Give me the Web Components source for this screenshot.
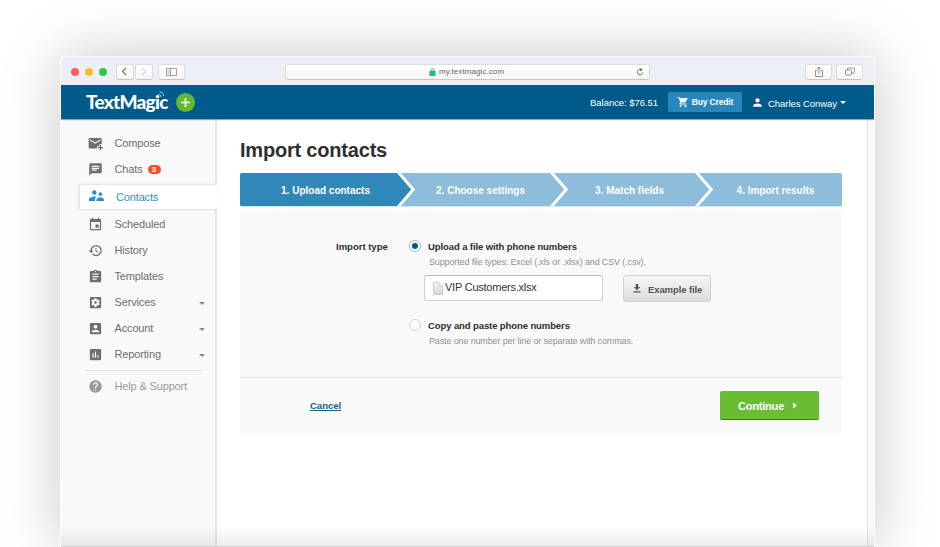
<!DOCTYPE html>
<html lang="en">
<head>
<meta charset="utf-8">
<title>Import contacts</title>
<style>
    html, body {
        margin: 0;
        padding: 0;
        height: 547px;
        overflow: hidden;
        background: #fff;
        font-family: "Liberation Sans", Arial, sans-serif;
    }
</style>
</head>
<body>
<browser-window>
    <browser-toolbar slot="toolbar" url="my.textmagic.com"></browser-toolbar>
    <app-header slot="header" balance="$76.51" user="Charles Conway"></app-header>
    <side-nav slot="nav">
        <nav-item icon="compose">Compose</nav-item>
        <nav-item icon="chat" badge="3">Chats</nav-item>
        <nav-item icon="contacts" active>Contacts</nav-item>
        <nav-item icon="event">Scheduled</nav-item>
        <nav-item icon="history">History</nav-item>
        <nav-item icon="clipboard">Templates</nav-item>
        <nav-item icon="services" expandable>Services</nav-item>
        <nav-item icon="account" expandable>Account</nav-item>
        <nav-item icon="report" expandable>Reporting</nav-item>
        <nav-item icon="help" muted>Help &amp; Support</nav-item>
    </side-nav>
    <import-page>
        <step-bar slot="steps">
            <step-item style="width:157px" active>1. Upload contacts</step-item>
            <step-item style="width:153px">2. Choose settings</step-item>
            <step-item style="width:145px">3. Match fields</step-item>
            <step-item style="width:147px" last>4. Import results</step-item>
        </step-bar>
        <radio-option checked label="Upload a file with phone numbers" hint="Supported file types: Excel (.xls or .xlsx) and CSV (.csv).">
            <file-picker name="VIP Customers.xlsx"></file-picker>
        </radio-option>
        <radio-option label="Copy and paste phone numbers" hint="Paste one number per line or separate with commas."></radio-option>
    </import-page>
</browser-window>

<script>
const icons = {
    compose: '<path d="M20 3H3C1.900 3 1 3.900 1 5v13c0 1.100.9 2 2 2h11.500v-3.500H18V13h4V5c0-1.100-.9-2-2-2zm0 4.200l-8.500 5.300L3 7.200V5l8.500 5.300L20 5z"/><path d="M19 14.500h2v3h3v2h-3v3h-2v-3h-3v-2h3z"/>',
    chat: '<path d="M20 2H4c-1.100 0-2 .9-2 2v18l4-4h14c1.100 0 2-.9 2-2V4c0-1.100-.9-2-2-2zM6 6h12v2H6zm0 3h12v2H6zm0 3h8v2H6z"/>',
    contacts: '<circle cx="8.500" cy="5.500" r="3.700"/><circle cx="18" cy="8" r="3"/><path d="M0 19v-2.500C0 13.500 5 12 8.500 12c1 0 2.300.1 3.500.4-1.700 1.200-2.500 2.600-2.500 4.600v2zM12 19v-2c0-2.500 3.500-4 6-4s6 1.500 6 4v2z"/>',
    event: '<path d="M17 12h-5v5h5v-5zM16 1v2H8V1H6v2H5c-1.110 0-1.990.9-1.990 2L3 19c0 1.100.89 2 2 2h14c1.100 0 2-.9 2-2V5c0-1.100-.9-2-2-2h-1V1h-2zm3 18H5V8h14v11z"/>',
    history: '<path d="M13 3a9 9 0 0 0-9 9H1l3.890 3.890.07.14L9 12H6c0-3.870 3.130-7 7-7s7 3.130 7 7-3.130 7-7 7c-1.930 0-3.680-.79-4.940-2.060l-1.420 1.420A8.950 8.950 0 0 0 13 21a9 9 0 0 0 0-18zm-1 5v5l4.280 2.540.72-1.210-3.500-2.080V8H12z"/>',
    clipboard: '<path d="M19 3h-4.180C14.400 1.840 13.300 1 12 1s-2.400.84-2.820 2H5c-1.100 0-2 .9-2 2v14c0 1.100.9 2 2 2h14c1.100 0 2-.9 2-2V5c0-1.100-.9-2-2-2zm-7 0c.55 0 1 .45 1 1s-.45 1-1 1-1-.45-1-1 .45-1 1-1zm2 14H7v-2h7v2zm3-4H7v-2h10v2zm0-4H7V7h10v2z"/>',
    services: '<path d="M12 10c-1.100 0-2 .9-2 2s.9 2 2 2 2-.9 2-2-.9-2-2-2zm7-7H5a2 2 0 0 0-2 2v14c0 1.100.89 2 2 2h14c1.110 0 2-.9 2-2V5a2 2 0 0 0-2-2zm-1.750 9c0 .23-.02.46-.05.68l1.480 1.160c.13.11.17.3.08.45l-1.400 2.420c-.09.15-.27.21-.43.15l-1.740-.7c-.36.28-.76.51-1.180.69l-.26 1.850c-.03.17-.18.3-.35.3h-2.800c-.17 0-.32-.13-.35-.29l-.26-1.850c-.43-.18-.82-.41-1.180-.69l-1.740.7c-.16.06-.34 0-.43-.15l-1.400-2.420c-.09-.15-.05-.34.08-.45l1.480-1.160a5.600 5.600 0 0 1 0-1.370l-1.480-1.160c-.13-.11-.17-.3-.08-.45l1.400-2.420c.09-.15.27-.21.43-.15l1.740.7c.36-.28.76-.51 1.180-.69l.26-1.850c.03-.17.18-.3.35-.3h2.800c.17 0 .32.13.35.29l.26 1.850c.43.18.82.41 1.180.69l1.740-.7c.16-.06.34 0 .43.15l1.400 2.420c.09.15.05.34-.08.45l-1.480 1.160c.03.23.05.46.05.69z"/>',
    account: '<path d="M3 5v14c0 1.100.89 2 2 2h14c1.100 0 2-.9 2-2V5c0-1.100-.9-2-2-2H5c-1.110 0-2 .9-2 2zm12 4c0 1.660-1.340 3-3 3s-3-1.340-3-3 1.340-3 3-3 3 1.340 3 3zm-9 8c0-2 4-3.100 6-3.100s6 1.100 6 3.100v1H6v-1z"/>',
    report: '<path d="M19 3H5c-1.100 0-2 .9-2 2v14c0 1.100.9 2 2 2h14c1.100 0 2-.9 2-2V5c0-1.100-.9-2-2-2zM9 17H7v-7h2v7zm4 0h-2V7h2v10zm4 0h-2v-4h2v4z"/>',
    help: '<path d="M12 2a10 10 0 1 0 0 20 10 10 0 0 0 0-20zm1 17h-2v-2h2v2zm2.070-7.750l-.9.920C13.450 12.900 13 13.500 13 15h-2v-.5c0-1.100.45-2.100 1.170-2.830l1.240-1.260c.37-.36.59-.86.59-1.410 0-1.100-.9-2-2-2s-2 .9-2 2H8a4 4 0 0 1 8 0c0 .88-.36 1.680-.93 2.250z"/>',
    cart: '<path d="M7 18a2 2 0 1 0 0 4 2 2 0 0 0 0-4zM1 2v2h2l3.600 7.590-1.350 2.450C4.520 15.370 5.480 17 7 17h12v-2H7.420l-.12-.37.9-1.630h7.450c.75 0 1.410-.41 1.750-1.030L21.700 4H5.210l-.94-2H1zm16 16a2 2 0 1 0 0 4 2 2 0 0 0 0-4z"/>',
    person: '<path d="M12 12c2.210 0 4-1.790 4-4s-1.790-4-4-4-4 1.790-4 4 1.790 4 4 4zm0 2c-2.670 0-8 1.340-8 4v2h16v-2c0-2.660-5.330-4-8-4z"/>'
};

class BaseElement extends HTMLElement {
    constructor() {
        super();
        this.attachShadow({mode: "open"});
    }

    connectedCallback() {
        this.shadowRoot.innerHTML = this.render();
    }

    attr(name) {
        return this.getAttribute(name) || "";
    }
}

class BrowserWindow extends BaseElement {
    render() {
        return `
        <style>
            :host {
                display: block;
                padding: 56px 0 0 60px;
            }
            .window {
                position: relative;
                display: flex;
                flex-direction: column;
                box-sizing: border-box;
                width: 815px;
                height: 491px;
                border: 1px solid #fff;
                border-bottom: 1px solid #d2d2d2;
                border-radius: 6px 6px 0 0;
                background: #fff;
                box-shadow: 0 0 60px rgba(0, 0, 0, 0.22);
                overflow: hidden;
            }
            .body {
                display: flex;
                flex: 1;
            }
            .rail {
                width: 6px;
                border-left: 1px solid #e2e2e2;
                background: #f9f9f9;
            }
            .fade {
                position: absolute;
                left: 0;
                right: 0;
                bottom: 0;
                height: 20px;
                background: linear-gradient(rgba(0, 0, 0, 0), rgba(0, 0, 0, 0.07));
            }
        </style>
        <div class="window">
            <slot name="toolbar"></slot>
            <slot name="header"></slot>
            <div class="body">
                <slot name="nav"></slot>
                <slot></slot>
                <div class="rail"></div>
            </div>
            <div class="fade"></div>
        </div>`;
    }
}

class BrowserToolbar extends BaseElement {
    render() {
        return `
        <style>
            :host {
                display: flex;
                align-items: center;
                box-sizing: border-box;
                height: 28px;
                padding: 1px 11px 0 10px;
                background: #eceff5;
            }
            .dot {
                width: 8px;
                height: 8px;
                margin-right: 6px;
                border-radius: 50%;
                background: #fb5d57;
            }
            .dot.min { background: #fdbb2d; }
            .dot.max { background: #2acb42; margin-right: 9px; }
            .btn {
                display: flex;
                align-items: center;
                justify-content: center;
                box-sizing: border-box;
                width: 27px;
                height: 16px;
                border: 1px solid #dcdde0;
                border-bottom-color: #c4c5c8;
                border-radius: 3px;
                background: linear-gradient(#fff, #f5f5f6);
            }
            .btn.small { width: 18px; margin-right: 1px; }
            .url {
                display: flex;
                align-items: center;
                box-sizing: border-box;
                width: 365px;
                height: 16px;
                margin: 0 155px 0 100px;
                padding: 0 5px 0 143px;
                border: 1px solid #dcdde0;
                border-bottom: 1px solid #c4c5c8;
                border-radius: 3px;
                background: linear-gradient(#fff, #f5f5f6);
                color: #666;
                font-size: 8px;
                line-height: 14px;
                letter-spacing: 0.08px;
            }
            .url span { margin: 0 auto 0 3px; }
            svg { display: block; fill: none; stroke: #888; }
        </style>
        <div class="dot"></div><div class="dot min"></div><div class="dot max"></div>
        <div class="btn small" style="padding-right:2px"><svg width="6" height="9" viewBox="0 0 6 9" style="stroke:#777;stroke-width:1.200"><path d="M5 1L1.500 4.500 5 8"/></svg></div>
        <div class="btn small"><svg width="6" height="9" viewBox="0 0 6 9" style="stroke:#bbb"><path d="M1 1l3.500 3.500L1 8"/></svg></div>
        <div class="btn" style="margin-left:4px"><svg width="11" height="8" viewBox="0 0 11 8"><path d="M.5.5h10v7H.5zM4.500.5v7" stroke-width=".8"/><path d="M1.500 2.500h2M1.500 4h2M1.500 5.500h2" stroke-width=".5"/></svg></div>
        <div class="url">
            <svg width="7" height="8" viewBox="0 0 7 8"><path d="M2 4V2.300a1.500 1.500 0 0 1 3 0V4" stroke="#16c172"/><rect x=".5" y="3" width="6" height="5" rx=".5" fill="#16c172" stroke="none"/></svg>
            <span>${this.attr("url")}</span>
            <svg width="8" height="8" viewBox="0 0 8 8"><path d="M5.900 2A2.700 2.700 0 1 0 6.700 4.400" stroke="#666"/><path d="M3.900 0l3 1.700-2.600 1.600z" fill="#666" stroke="none"/></svg>
        </div>
        <div class="btn" style="margin-right:4px"><svg width="10" height="12" viewBox="0 0 10 12" stroke-width=".9"><path d="M3.500 4.500h-2v6h7v-6h-2M5 8V1M3 3l2-2 2 2"/></svg></div>
        <div class="btn"><svg width="10" height="9" viewBox="0 0 10 9" stroke-width=".9"><rect x=".5" y="3" width="6" height="5" rx="1"/><path d="M2.500 3V2c0-.6.4-1 1-1h5c.6 0 1 .4 1 1v3c0 .6-.4 1-1 1h-2"/></svg></div>`;
    }
}

class AppHeader extends BaseElement {
    render() {
        return `
        <style>
            :host {
                display: flex;
                align-items: center;
                box-sizing: border-box;
                position: relative;
                height: 34px;
                padding: 0 28px 0 25px;
                background: #005b8a;
                box-shadow: 0 1px 1px rgba(0, 0, 0, 0.35);
                color: #fff;
                font-size: 9.500px;
                z-index: 1;
            }
            .logo {
                position: relative;
                width: 83px;
                font: 900 19px/24px Lato, sans-serif;
                letter-spacing: -0.75px;
                white-space: nowrap;
            }
            .logo svg {
                position: absolute;
                right: 4px;
                top: 1px;
                fill: none;
                stroke: #b9d4e3;
            }
            .add {
                width: 19px;
                height: 19px;
                margin: 1px auto 0 7px;
            }
            .buy {
                display: flex;
                align-items: center;
                justify-content: center;
                width: 74px;
                height: 20px;
                margin: 0 9px 0 10px;
                border-radius: 2px;
                background: #2986bb;
                font-size: 8.500px;
                font-weight: bold;
                white-space: nowrap;
            }
            .buy span { letter-spacing: -0.15px; margin-bottom: 1px; }
            .balance, .user { margin-top: 1px; white-space: nowrap; letter-spacing: -0.05px; }
            .user { width: 69px; margin-left: 4px; margin-top: 2px; }
            .caret {
                margin: 1px 0 0 3px;
                border: 3px solid transparent;
                border-top-color: #fff;
                border-bottom: 0;
            }
            svg { display: block; fill: #fff; }
        </style>
        <div class="logo">TextMagic<svg width="8" height="8" viewBox="0 0 8 8"><path d="M1.500 3.500c1.500 0 2.500 1 2.500 2.500M2.500 1c2.500 0 4 1.500 4 4"/></svg></div>
        <svg class="add" viewBox="0 0 19 19"><circle cx="9.500" cy="9.500" r="9.500" fill="#65b932"/><path d="M9.500 5v9M5 9.500h9" stroke="#fff" stroke-width="1.600"/></svg>
        <span class="balance">Balance: ${this.attr("balance")}</span>
        <div class="buy"><svg width="12" height="12" viewBox="0 0 24 24" style="margin-right:3px">${icons.cart}</svg><span>Buy Credit</span></div>
        <svg width="13" height="13" viewBox="0 0 24 24">${icons.person}</svg>
        <span class="user">${this.attr("user")}</span>
        <div class="caret"></div>`;
    }
}

class SideNav extends BaseElement {
    render() {
        return `
        <style>
            :host {
                display: block;
                box-sizing: border-box;
                width: 156px;
                padding-top: 11px;
                border-right: 2px solid #e6e6e6;
                background: #f9f9f9;
            }
        </style>
        <slot></slot>`;
    }
}

class NavItem extends BaseElement {
    render() {
        return `
        <style>
            :host {
                display: flex;
                align-items: center;
                box-sizing: border-box;
                height: 26px;
                padding: 0 10px 0 27px;
                color: #6e6e6e;
                font-size: 11px;
            }
            :host([active]) {
                position: relative;
                margin: 2px -2px 1px 18px;
                padding-left: 8px;
                border: 1px solid #e6e6e6;
                border-right: 0;
                border-radius: 2px 0 0 2px;
                background: #fff;
                box-shadow: -1px 0 3px rgba(0, 0, 0, 0.08);
                color: #2a8fc4;
            }
            :host([muted]) {
                height: 31px;
                margin: 3px 13px 0 24px;
                padding: 0 0 0 3px;
                border-top: 1px solid #dfdfdf;
                color: #999;
            }
            .icon {
                width: 15px;
                height: 15px;
                margin: 1px 11.500px 0 0;
                fill: currentColor;
                flex: none;
            }
            :host([active]) .icon { margin: -2px 12px 0 1px; }
            .badge {
                width: 13px;
                height: 9px;
                margin-left: 5px;
                border-radius: 5px;
                background: #f4502f;
                color: #fff;
                font-size: 8px;
                font-weight: bold;
                line-height: 9px;
                text-align: center;
            }
            .caret {
                margin: 2px 0 0 auto;
                border: 3.500px solid transparent;
                border-top-color: #888;
                border-bottom: 0;
            }
            .label { white-space: nowrap; letter-spacing: -0.15px; }
        </style>
        <svg class="icon" viewBox="0 0 24 24">${icons[this.attr("icon")]}</svg>
        <span class="label"><slot></slot></span>
        ${this.hasAttribute("badge") ? `<span class="badge">${this.attr("badge")}</span>` : ""}
        ${this.hasAttribute("expandable") ? '<div class="caret"></div>' : ""}`;
    }
}

class StepBar extends BaseElement {
    render() {
        return `
        <style>
            :host {
                display: flex;
                height: 33px;
                border-radius: 2px;
                overflow: hidden;
                border-bottom: 1px solid #d5e7f2;
            }
        </style>
        <slot></slot>`;
    }
}

class StepItem extends BaseElement {
    render() {
        const arrow = `<svg width="20" height="33" viewBox="0 0 20 33"><path class="fill" d="M0 0h1l15 16.500L1 33H0z"/><path d="M.2-2l16 18.500L.2 35" fill="none" stroke="#fff" stroke-width="3"/></svg>`;
        return `
        <style>
            :host {
                --step: #8dbddb;
                display: flex;
                align-items: center;
                justify-content: center;
                position: relative;
                box-sizing: border-box;
                height: 33px;
                padding: 1px 0 0 14px;
                background: var(--step);
                color: #fff;
                font-size: 10px;
                font-weight: bold;
                white-space: nowrap;
            }
            :host([active]) { --step: #3088b8; }
            svg {
                position: absolute;
                left: 100%;
                top: 0;
                z-index: 1;
            }
            .fill { fill: var(--step); }
        </style>
        <slot></slot>${this.hasAttribute("last") ? "" : arrow}`;
    }
}

class RadioOption extends BaseElement {
    render() {
        return `
        <style>
            :host { display: block; height: 78.500px; }
            .row { display: flex; align-items: center; height: 13px; }
            .radio {
                display: flex;
                align-items: center;
                justify-content: center;
                box-sizing: border-box;
                width: 12px;
                height: 12px;
                margin: -1px 7px 0 0;
                border: 1px solid #d0d0d0;
                border-radius: 50%;
                background: #fff;
            }
            :host([checked]) .radio { border-color: #8cbbd6; }
            :host([checked]) .radio::after {
                content: "";
                width: 6px;
                height: 6px;
                border-radius: 50%;
                background: #005b8a;
            }
            b { font-size: 9.500px; color: #2e2e2e; white-space: nowrap; letter-spacing: -0.1px; }
            p {
                margin: 4px 0 0 20px;
                color: #919191;
                font-size: 9px;
                line-height: 11px;
                letter-spacing: -0.14px;
                white-space: nowrap;
            }
        </style>
        <div class="row"><div class="radio"></div><b>${this.attr("label")}</b></div>
        <p>${this.attr("hint")}</p>
        <slot></slot>`;
    }
}

class FilePicker extends BaseElement {
    render() {
        return `
        <style>
            :host {
                display: flex;
                gap: 20px;
                margin: 7px 0 0 15px;
            }
            .field, .example {
                display: flex;
                align-items: center;
                box-sizing: border-box;
                border: 1px solid #d0d0d0;
                border-radius: 3px;
                white-space: nowrap;
            }
            .field {
                width: 179px;
                height: 26px;
                padding: 0 0 2px 8px;
                border-top-color: #bbb;
                background: #fff;
                color: #333;
                font-size: 11px;
                letter-spacing: -0.23px;
            }
            .field svg { margin: 3px 2px 0 0; }
            .example {
                width: 88px;
                height: 27px;
                padding: 1px 0 0 9px;
                background: linear-gradient(#f6f6f6, #dcdcdc);
                color: #555;
                font-size: 9.500px;
                font-weight: bold;
                letter-spacing: -0.1px;
            }
            .example svg { margin: -2px 7px 0 0; }
        </style>
        <div class="field"><svg width="10" height="13" viewBox="0 0 10 13"><defs><linearGradient id="paper" x2="0" y2="1"><stop stop-color="#f6f6f6"/><stop offset="1" stop-color="#d6d6d6"/></linearGradient></defs><path d="M.5.5h5.500l3.500 3.500v8.500h-9z" fill="url(#paper)" stroke="#bbb" stroke-width=".7"/><path d="M6 .5V4h3.500" fill="#fff" stroke="#bbb" stroke-width=".7"/></svg>${this.attr("name")}</div>
        <div class="example"><svg width="8" height="9" viewBox="0 0 8 9" fill="#555"><path d="M2.800 0h2.400v3H7.200L4 6.200.8 3h2zM.5 7.200h7v1.300h-7z"/></svg>Example file</div>`;
    }
}

class ImportPage extends BaseElement {
    render() {
        return `
        <style>
            :host {
                display: block;
                box-sizing: border-box;
                flex: 1;
                padding: 18px 25px 0 23px;
            }
            h1 {
                height: 26px;
                margin: 0 0 10px;
                color: #2f2f2f;
                font-size: 20px;
                line-height: 26px;
                letter-spacing: -0.2px;
            }
            .panel {
                margin-top: 3px;
                height: 223px;
                background: #f9f9f9;
            }
            .form {
                display: flex;
                box-sizing: border-box;
                height: 168px;
                padding: 30px 0 0 96px;
                border-bottom: 1px solid #e2e2e2;
            }
            .title {
                width: 73px;
                color: #2e2e2e;
                font-size: 9.500px;
                font-weight: bold;
                line-height: 13px;
            }
            .actions {
                display: flex;
                align-items: center;
                justify-content: space-between;
                height: 55px;
                padding: 0 23px 0 70px;
                font-weight: bold;
            }
            a { color: #14608a; font-size: 9.500px; }
            .continue {
                display: flex;
                align-items: center;
                box-sizing: border-box;
                width: 99px;
                height: 29px;
                padding: 1px 0 0 18px;
                border-radius: 2px;
                border-bottom: 1px solid #34850b;
                background: #69bd33;
                color: #fff;
                font-size: 11px;
                letter-spacing: -0.2px;
            }
            .continue svg { margin-left: 9px; }
        </style>
        <h1>Import contacts</h1>
        <slot name="steps"></slot>
        <div class="panel">
            <div class="form">
                <div class="title">Import type</div>
                <div><slot></slot></div>
            </div>
            <div class="actions">
                <a href="#">Cancel</a>
                <div class="continue">Continue<svg width="4" height="7" viewBox="0 0 4 7" fill="#fff"><path d="M0 .5L4 3.500 0 6.500z"/></svg></div>
            </div>
        </div>`;
    }
}

customElements.define("browser-window", BrowserWindow);
customElements.define("browser-toolbar", BrowserToolbar);
customElements.define("app-header", AppHeader);
customElements.define("side-nav", SideNav);
customElements.define("nav-item", NavItem);
customElements.define("step-bar", StepBar);
customElements.define("step-item", StepItem);
customElements.define("radio-option", RadioOption);
customElements.define("file-picker", FilePicker);
customElements.define("import-page", ImportPage);
</script>
</body>
</html>
